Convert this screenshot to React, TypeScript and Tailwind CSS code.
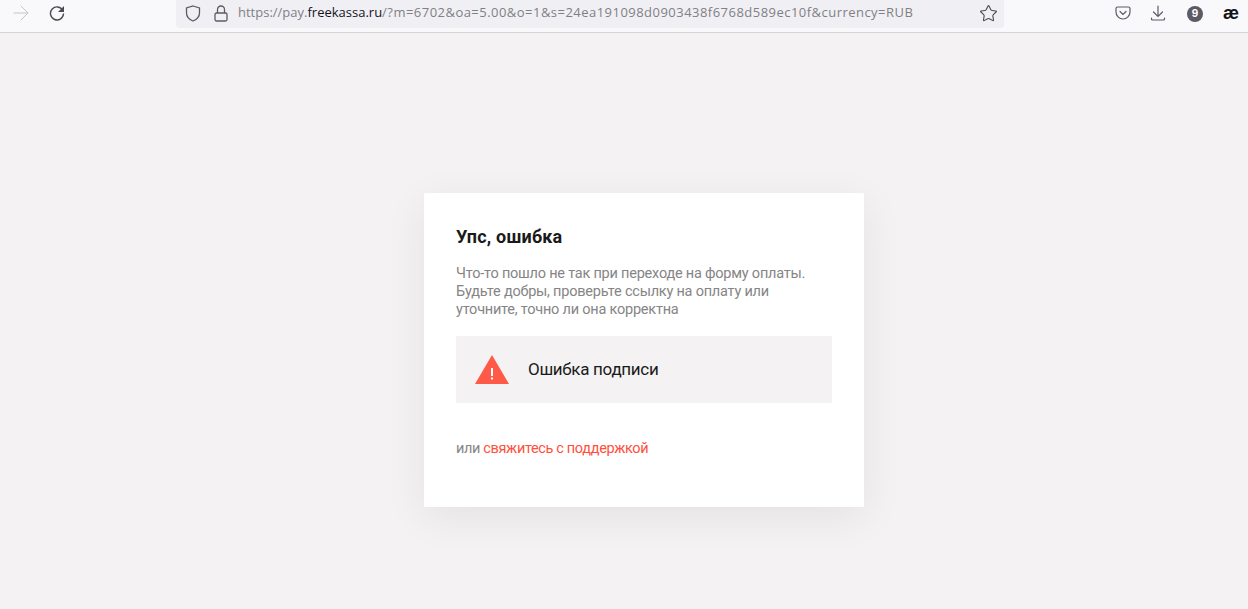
import React from 'react';
import { ArrowRight, Star } from 'lucide-react';

const BrowserBar: React.FC = () => {
  return (
    <div className="h-[33px] bg-[#f9f9fb] border-b border-[#d4d4d6] flex items-start shrink-0">
      <div className="w-[176px] h-[26px] flex items-center shrink-0">
        <ArrowRight className="w-[24px] h-[24px] ml-[9px] text-[#c4c4c8]" strokeWidth={1} />
        <svg viewBox="0 0 16 16" className="w-[16px] h-[16px] ml-[16px] text-[#4c4c50]" fill="none" stroke="currentColor" strokeWidth="1.4">
          <path d="M13.800 5.500A6.500 6.500 0 1 0 14.500 8.500" />
          <path d="M15 1v6H9z" fill="currentColor" stroke="none" />
        </svg>
      </div>
      <div className="w-[828px] h-[28px] pb-[2px] bg-[#f0f0f4] rounded-b-[4px] flex items-center shrink-0">
        <svg viewBox="0 0 16 17" className="w-[16px] h-[17px] ml-[9px] text-[#5b5b66]" fill="none" stroke="currentColor" strokeWidth="1.3">
          <path d="M8 1 14.500 3v5c0 4-3 6.500-6.500 8C4.500 14.500 1.500 12 1.500 8V3z" />
        </svg>
        <svg viewBox="0 0 14 17" className="w-[14px] h-[17px] ml-[13px] text-[#5b5b66]" fill="none" stroke="currentColor" strokeWidth="1.3">
          <rect x="1" y="8" width="12" height="8" rx="1.500" />
          <path d="M3.500 8V4.500a3.500 3.500 0 0 1 7 0V8" />
        </svg>
        <div className="ml-[10px] w-[700px] text-[13px] text-[#808084] whitespace-nowrap font-['Open_Sans',sans-serif]">
          https://pay.<span className="text-[#15141a]">freekassa.ru</span>
          <span className="tracking-[0.47px]">/?m=6702&amp;oa=5.00&amp;o=1&amp;s=24ea191098d0903438f6768d589ec10f&amp;currency=RUB</span>
        </div>
        <Star className="w-[19px] h-[19px] ml-[41px] text-[#4c4c50]" strokeWidth={1.4} />
      </div>
      <div className="flex-1 h-[25px] flex items-center">
        <svg viewBox="0 0 16 16" className="w-[16px] h-[16px] ml-[111px] text-[#5b5b66]" fill="none" stroke="currentColor" strokeWidth="1.2">
          <path d="M2.500 2h11A1.500 1.500 0 0 1 15 3.500V7a7 7 0 0 1-14 0V3.500A1.500 1.500 0 0 1 2.500 2z" />
          <path d="M5 6.500 8 9.500l3-3" strokeLinecap="round" />
        </svg>
        <svg viewBox="0 0 16 16" className="w-[16px] h-[16px] ml-[19px] text-[#5b5b66]" fill="none" stroke="currentColor" strokeWidth="1.2">
          <path d="M8 1v10M3.500 7 8 11.500 12.500 7" strokeLinecap="round" />
          <path d="M1.500 13v1a1 1 0 0 0 1 1h11a1 1 0 0 0 1-1v-1" strokeLinecap="round" />
        </svg>
        <div className="w-[16px] h-[16px] ml-[21px] mt-[2px] rounded-full bg-[#5b5b66] text-white text-[10px] font-bold flex items-center justify-center font-['Inter',sans-serif]">
          9
        </div>
        <span className="ml-[20px] text-[18px] font-bold text-[#15141a] leading-none font-['Liberation_Sans',sans-serif]">æ</span>
      </div>
    </div>
  );
};

export default function App() {
  return (
    <div className="w-[1248px] h-[609px] bg-[#f4f2f3] flex flex-col overflow-hidden font-['Roboto',sans-serif]">
      <BrowserBar />
      <div className="flex pl-[424px] pt-[160px]">
        <div className="w-[440px] h-[314px] bg-white px-[32px] pt-[32px] shadow-[0_10px_40px_rgba(0,0,0,0.07)]">
          <h1 className="text-[18px] leading-[24px] font-bold tracking-[0.2px] text-[#1a1a1a]">Упс, ошибка</h1>
          <p className="mt-[16px] text-[14.5px] leading-[18px] tracking-[-0.22px] text-[#858585]">
            Что-то пошло не так при переходе на форму оплаты.
            <br />
            Будьте добры, проверьте ссылку на оплату или
            <br />
            уточните, точно ли она корректна
          </p>
          <div className="mt-[17px] h-[67px] bg-[#f4f2f3] flex items-center pl-[19px]">
            <svg viewBox="0 0 34 29" className="w-[34px] h-[29px]">
              <path d="M17 0 34 29H0z" fill="#ff5a47" />
              <rect x="16" y="13" width="2" height="8" fill="#fff" />
              <rect x="16" y="22.500" width="2" height="2" fill="#fff" />
            </svg>
            <span className="ml-[19px] mt-[1px] text-[17px] tracking-[-0.3px] text-[#1a1a1a]">Ошибка подписи</span>
          </div>
          <p className="mt-[36px] text-[14.5px] leading-[20px] tracking-[-0.35px] text-[#858585]">
            или <a href="#" className="text-[#ff4f3d]">свяжитесь с поддержкой</a>
          </p>
        </div>
      </div>
    </div>
  );
}
